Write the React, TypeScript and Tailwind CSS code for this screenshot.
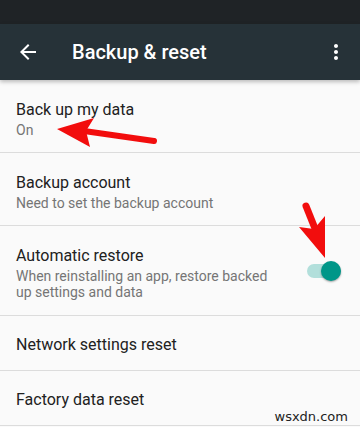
import React from "react";

const FONT = { fontFamily: "Roboto, 'Liberation Sans', sans-serif" };

interface RowProps {
    title: string
    summary?: string
    twoLine?: boolean
    toggle?: boolean
    tall?: boolean
}

const Toggle = () => {
    return <div className="relative w-[34px] h-[20px] flex items-center">
        <div className="w-[34px] h-[14px] rounded-full bg-[#b2dfdb]" />
        <div className="absolute right-0 top-0 w-[20px] h-[20px] rounded-full bg-[#009688] shadow-[0_1px_2px_rgba(0,0,0,0.35)]" />
    </div>
}

const SettingRow = ({title, summary, twoLine, toggle, tall}: RowProps) => {
    if (!summary) {
        return <div className="h-[55px] border-b border-[#dcdcdc] flex items-center px-4 pt-[3px]">
            <span className="text-[16px] leading-5 text-[#212121]">{title}</span>
        </div>
    }
    return <div className={`${tall ? "h-[90px]" : "h-[73px]"} border-b border-[#dcdcdc] flex items-center pl-4 pr-[19px]`}>
        <div className={`flex-1 self-start pt-[20px] ${toggle ? "pr-6" : ""}`}>
            <div className="text-[16px] leading-5 text-[#212121]">{title}</div>
            {twoLine
                ? <div className="mt-[2px] text-[14px] leading-4 text-[#757575]">{summary}</div>
                : <div className="text-[14px] leading-5 text-[#757575]">{summary}</div>}
        </div>
        {toggle && <Toggle />}
    </div>
}

const Annotations = () => {
    return <svg className="absolute inset-0 pointer-events-none" width="360" height="427" viewBox="0 0 360 427">
        {/* arrow pointing at "On" */}
        <line x1="154" y1="141" x2="84" y2="131" stroke="#f20d0d" strokeWidth="6" strokeLinecap="round" />
        <polygon points="57,129 94,118 86,131 90,147" fill="#f20d0d" />
        {/* arrow pointing at the toggle */}
        <line x1="306" y1="206" x2="318" y2="236" stroke="#f20d0d" strokeWidth="7" strokeLinecap="round" />
        <polygon points="325,258 299,227 314,229 325,216" fill="#f20d0d" />
    </svg>
}

const App = () => {
    return <div className="relative w-[360px] h-[427px] overflow-hidden bg-[#fafafa] flex flex-col" style={FONT}>
        <div className="h-6 bg-[#1f2326] shrink-0" />
        <div className="h-14 bg-[#263238] shrink-0 flex items-center px-4 shadow-[0_2px_4px_rgba(0,0,0,0.25)] relative z-10">
            <svg width="24" height="24" viewBox="0 0 24 24" fill="#ffffff">
                <path d="M20 11H7.83l5.59-5.59L12 4l-8 8 8 8 1.41-1.41L7.83 13H20v-2z" />
            </svg>
            <span className="ml-8 text-[20px] font-medium text-white flex-1">Backup &amp; reset</span>
            <svg width="24" height="24" viewBox="0 0 24 24" fill="#ffffff" className="-mr-1">
                <path d="M12 8c1.1 0 2-.9 2-2s-.9-2-2-2-2 .9-2 2 .9 2 2 2zm0 2c-1.1 0-2 .9-2 2s.9 2 2 2 2-.9 2-2-.9-2-2-2zm0 6c-1.1 0-2 .9-2 2s.9 2 2 2 2-.9 2-2-.9-2-2-2z" />
            </svg>
        </div>
        <SettingRow title="Back up my data" summary="On" />
        <SettingRow title="Backup account" summary="Need to set the backup account" />
        <SettingRow title="Automatic restore" summary="When reinstalling an app, restore backed up settings and data" twoLine toggle tall />
        <SettingRow title="Network settings reset" />
        <SettingRow title="Factory data reset" />
        <Annotations />
        <span className="absolute right-[12px] bottom-[2px] text-[13px] text-[#222] leading-4" style={{fontFamily: "'DejaVu Sans', sans-serif"}}>wsxdn.com</span>
    </div>
}

export default App;
